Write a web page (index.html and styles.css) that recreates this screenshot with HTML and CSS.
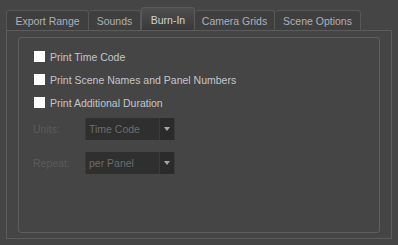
FILE: index.html
```html
<!DOCTYPE html>
<html lang="en">
<head>
    <meta charset="UTF-8">
    <title>Burn-In</title>
    <link rel="stylesheet" href="styles.css">
</head>
<body>
    <div class="dialog">
        <div class="tabs">
            <div class="tab tab-export">Export Range</div>
            <div class="tab tab-sounds">Sounds</div>
            <div class="tab tab-active">Burn-In</div>
            <div class="tab tab-grids">Camera Grids</div>
            <div class="tab tab-scene">Scene Options</div>
        </div>
        <div class="panel">
            <div class="group">
                <div class="check-list">
                    <label class="check-row"><span class="checkbox"></span>Print Time Code</label>
                    <label class="check-row"><span class="checkbox"></span>Print Scene Names and Panel Numbers</label>
                    <label class="check-row"><span class="checkbox"></span>Print Additional Duration</label>
                </div>
                <div class="options">
                    <div class="option-row">
                        <span class="option-label">Units:</span>
                        <div class="combo">
                            <span class="combo-field">Time Code</span>
                            <span class="combo-button"><span class="arrow"></span></span>
                        </div>
                    </div>
                    <div class="option-row">
                        <span class="option-label">Repeat:</span>
                        <div class="combo">
                            <span class="combo-field">per Panel</span>
                            <span class="combo-button"><span class="arrow"></span></span>
                        </div>
                    </div>
                </div>
            </div>
        </div>
    </div>
</body>
</html>
```

FILE: styles.css
```css
*{
    box-sizing: border-box;
}

body{
    margin: 0;
    background-color: #454545;
    font-family: "Liberation Sans", Arial, sans-serif;
    font-size: 10.5px;
    color: #c4c6cc;
}

.dialog{
    padding: 7px 6px 0 6px;
}

.tabs{
    display: flex;
    align-items: flex-end;
    height: 23px;
}

.tab{
    height: 20px;
    line-height: 20px;
    text-align: center;
    border: 1px solid #575757;
    border-bottom: none;
    border-left: none;
    border-radius: 3px 3px 0 0;
    background-color: #3f3f3f;
    color: #aeb0b8;
}

.tab:first-child{
    border-left: 1px solid #575757;
}

.tab-export{
    width: 83px;
}

.tab-sounds{
    width: 52px;
}

.tab-grids{
    width: 80px;
}

.tab-scene{
    width: 86px;
}

.tab-active{
    width: 54px;
    height: 23px;
    line-height: 24px;
    border: 1px solid #5a5a5a;
    border-bottom: none;
    background: linear-gradient(#4e4e4e, #393939);
    color: #d0d2d8;
}

.panel{
    height: 209px;
    border: 1px solid #5c5c5c;
    padding: 6px 11px 0 11px;
}

.group{
    height: 196px;
    border: 1px solid #5e5e5e;
    border-radius: 3px;
    padding: 13px 14px 0 14px;
}

.check-list{
    display: flex;
    flex-direction: column;
    gap: 12px;
}

.check-row{
    display: flex;
    align-items: center;
    height: 11px;
}

.checkbox{
    width: 11px;
    height: 11px;
    margin-left: 1px;
    margin-right: 5px;
    background-color: #ffffff;
}

.options{
    display: flex;
    flex-direction: column;
    gap: 12px;
    margin-top: 10px;
}

.option-row{
    display: flex;
    align-items: center;
    height: 22px;
}

.option-label{
    width: 52px;
    color: #5b5b5b;
}

.combo{
    display: flex;
    gap: 1px;
    height: 22px;
    padding: 0 1px;
    background-color: #3b3b3b;
}

.combo-field{
    width: 73px;
    padding-left: 3px;
    line-height: 22px;
    background-color: #2f2f2f;
    color: #6c6c6c;
}

.combo-button{
    display: flex;
    align-items: center;
    justify-content: center;
    width: 14px;
    background-color: #2b2b2b;
}

.arrow{
    width: 0;
    height: 0;
    border-left: 3px solid transparent;
    border-right: 3px solid transparent;
    border-top: 4px solid #a8a8a8;
}
```
